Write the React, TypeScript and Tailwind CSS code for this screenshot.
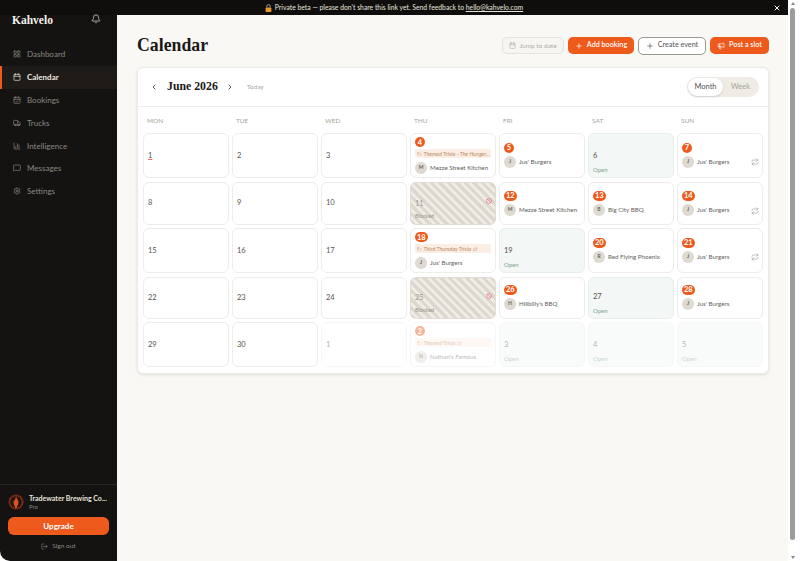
import type { ReactNode } from 'react';
import {
  Ban,
  Bell,
  Calendar,
  CalendarCheck,
  ChartColumn,
  ChevronLeft,
  ChevronRight,
  LayoutGrid,
  LogOut,
  Megaphone,
  MessageSquare,
  Plus,
  Repeat,
  Settings,
  Tag,
  Truck,
  X,
} from 'lucide-react';

interface Day {
  n: number;
  kind: 'empty' | 'open' | 'blocked' | 'booked';
  vendor?: string;
  event?: string;
  repeat?: boolean;
  muted?: boolean;
}

const nav = [
  { label: 'Dashboard', icon: LayoutGrid },
  { label: 'Calendar', icon: Calendar, active: true },
  { label: 'Bookings', icon: CalendarCheck },
  { label: 'Trucks', icon: Truck },
  { label: 'Intelligence', icon: ChartColumn },
  { label: 'Messages', icon: MessageSquare },
  { label: 'Settings', icon: Settings },
];

const weekdays = ['MON', 'TUE', 'WED', 'THU', 'FRI', 'SAT', 'SUN'];

const days: Day[] = [
  { n: 1, kind: 'empty' },
  { n: 2, kind: 'empty' },
  { n: 3, kind: 'empty' },
  { n: 4, kind: 'booked', vendor: 'Mezze Street Kitchen', event: 'Themed Trivia - The Hunger...' },
  { n: 5, kind: 'booked', vendor: "Jus' Burgers" },
  { n: 6, kind: 'open' },
  { n: 7, kind: 'booked', vendor: "Jus' Burgers", repeat: true },
  { n: 8, kind: 'empty' },
  { n: 9, kind: 'empty' },
  { n: 10, kind: 'empty' },
  { n: 11, kind: 'blocked' },
  { n: 12, kind: 'booked', vendor: 'Mezze Street Kitchen' },
  { n: 13, kind: 'booked', vendor: 'Big City BBQ' },
  { n: 14, kind: 'booked', vendor: "Jus' Burgers", repeat: true },
  { n: 15, kind: 'empty' },
  { n: 16, kind: 'empty' },
  { n: 17, kind: 'empty' },
  { n: 18, kind: 'booked', vendor: "Jus' Burgers", event: 'Third Thursday Trivia' },
  { n: 19, kind: 'open' },
  { n: 20, kind: 'booked', vendor: 'Red Flying Phoenix' },
  { n: 21, kind: 'booked', vendor: "Jus' Burgers", repeat: true },
  { n: 22, kind: 'empty' },
  { n: 23, kind: 'empty' },
  { n: 24, kind: 'empty' },
  { n: 25, kind: 'blocked' },
  { n: 26, kind: 'booked', vendor: "Hillbilly's BBQ" },
  { n: 27, kind: 'open' },
  { n: 28, kind: 'booked', vendor: "Jus' Burgers" },
  { n: 29, kind: 'empty' },
  { n: 30, kind: 'empty' },
  { n: 1, kind: 'empty', muted: true },
  { n: 2, kind: 'booked', vendor: "Nathan's Famous", event: 'Themed Trivia', muted: true },
  { n: 3, kind: 'open', muted: true },
  { n: 4, kind: 'open', muted: true },
  { n: 5, kind: 'open', muted: true },
];

function DayCell({ day, first }: { day: Day; first: boolean }) {
  const base = `h-full rounded-[6px] border pl-[4px] ${day.muted ? 'opacity-45' : ''}`;

  if (day.kind === 'open') {
    return (
      <div className={`${base} flex flex-col justify-end gap-[6px] border-[#e8eeeb] bg-[#f3f7f5] pb-[4px]`}>
        <span className="text-[7.5px] leading-[9px] text-[#55544f]">{day.n}</span>
        <span className="text-[6px] leading-[7px] text-[#7fa58f]">Open</span>
      </div>
    );
  }

  if (day.kind === 'blocked') {
    return (
      <div className={`${base} relative flex flex-col justify-end gap-[5px] border-[#e0dcd4] bg-[repeating-linear-gradient(45deg,#dcd8cf_0px,#dcd8cf_3px,#efece6_3px,#efece6_6px)] pb-[4px]`}>
        <span className="text-[7.5px] leading-[9px] text-[#a09c93]">{day.n}</span>
        <span className="text-[5.5px] leading-[7px] text-[#97938a]">Blocked</span>
        <Ban className="absolute right-[3px] top-[15px] size-[6px] text-[#e8668f]" strokeWidth={2.5} />
      </div>
    );
  }

  if (day.kind === 'empty') {
    return (
      <div className={`${base} flex items-center border-[#eeece8] bg-white`}>
        <span className={`text-[7.5px] text-[#55544f] ${first ? 'underline decoration-red-400' : ''}`}>{day.n}</span>
      </div>
    );
  }

  return (
    <div className={`${base} relative flex flex-col justify-center border-[#eeece8] bg-white pr-[4px]`}>
      <span className="flex h-[10px] min-w-[10px] items-center justify-center self-start rounded-full bg-[#ee5a1c] px-[2px] text-[7.5px] font-bold text-white">
        {day.n}
      </span>
      {day.event && (
        <div className="mt-[2px] flex h-[9px] items-center gap-[2px] rounded-[2px] bg-[#fdeee5] px-[2px] text-[5.5px] italic text-[#b98a63]">
          <Tag className="size-[4.5px] shrink-0" />
          <span className="whitespace-nowrap">{day.event}</span>
          {day.n !== 4 && <Repeat className="size-[4.5px] shrink-0" />}
        </div>
      )}
      <div className={`${day.event ? 'mt-[3.5px]' : 'mt-[3px]'} flex items-center gap-[3px]`}>
        <span className="flex size-[12px] shrink-0 items-center justify-center rounded-full bg-[#dedad2] text-[5px] font-bold text-[#66625b]">
          {day.vendor?.charAt(0)}
        </span>
        <span className="whitespace-nowrap text-[6.2px] text-[#62615c]">{day.vendor}</span>
      </div>
      {day.repeat && <Repeat className="absolute right-[3px] top-[24px] size-[8px] text-[#a8a49d]" />}
    </div>
  );
}

function ActionButton({ children, outline, width }: { children: ReactNode; outline?: boolean; width: string }) {
  return (
    <button
      className={`${width} ${
        outline
          ? 'flex h-[18px] items-center justify-center gap-[4px] rounded-[5px] border border-[#9a9892] bg-white text-[7.2px] text-[#55544f]'
          : 'flex h-[17px] items-center justify-center gap-[4px] rounded-[5px] bg-[#ee5a1c] text-[7.2px] font-semibold text-white'
      }`}
    >
      {children}
    </button>
  );
}

function BrewLogo() {
  return (
    <svg viewBox="0 0 32 32" className="size-[16px] shrink-0">
      <circle cx="16" cy="16" r="15.5" fill="#1c1210" />
      <circle cx="16" cy="16" r="13" fill="none" stroke="#8a3217" strokeWidth="4" strokeDasharray="3 1" />
      <path d="M16 5c1 4 5 6 5 12 0 3-1 6-3 8v3h-4v-3c-2-2-3-5-3-8 0-3 1-5 2-6 0 2 1 3 1 3 0-4 1-6 2-9z" fill="#d9531f" />
    </svg>
  );
}

function Sidebar() {
  return (
    <aside className="relative flex w-[117px] shrink-0 flex-col rounded-bl-[10px] bg-[#141312]">
      <div className="-mt-[4px] flex h-[16px] items-center justify-between pl-[12px] pr-[16px]">
        <span className="translate-y-[2px] font-['Liberation_Serif',serif] text-[11.5px] font-bold text-[#f5f2ec]">Kahvelo</span>
        <Bell className="size-[10px] text-[#c9c5be]" />
      </div>
      <nav className="mt-[16px] flex flex-col">
        {nav.map((item) => (
          <div
            key={item.label}
            className={`flex h-[22.8px] items-center gap-[6px] border-l-2 pl-[11px] text-[8px] ${
              item.active
                ? 'border-[#ee5a1c] bg-[#1f1b18] font-bold text-[#ece8e0]'
                : 'border-transparent text-[#8b8780]'
            }`}
          >
            <item.icon className="size-[8px]" />
            {item.label}
          </div>
        ))}
      </nav>
      <div className="mt-auto border-t border-[#2a2825] px-[8px] pb-[10px] pt-[8px]">
        <div className="flex items-center gap-[5px]">
          <BrewLogo />
          <div className="min-w-0 leading-none">
            <div className="whitespace-nowrap text-[7px] font-bold leading-[10px] text-[#e8e4dc]">Tradewater Brewing Co...</div>
            <div className="text-[6px] leading-[8px] text-[#8b8780]">Pro</div>
          </div>
        </div>
        <button className="mt-[6px] flex h-[18px] w-full items-center justify-center rounded-[6px] bg-[#ee5a1c] text-[8px] font-bold text-white">
          Upgrade
        </button>
        <div className="mt-[6px] flex h-[10px] items-center justify-center gap-[4px] text-[6.5px] text-[#8b8780]">
          <LogOut className="size-[7px]" />
          Sign out
        </div>
      </div>
    </aside>
  );
}

function CalendarCard() {
  return (
    <section className="mt-[12px] rounded-[6px] border border-[#eeece8] bg-white pb-[6px] shadow-[0_1px_3px_rgba(0,0,0,0.12)]">
      <div className="flex h-[39px] items-center border-b border-[#efedea] pl-[12px] pr-[9px]">
        <ChevronLeft className="size-[8px] text-[#3a3936]" strokeWidth={2.5} />
        <span className="ml-[9px] font-['Liberation_Serif',serif] text-[11.8px] font-bold text-[#1a1917]">June 2026</span>
        <ChevronRight className="ml-[8px] size-[8px] text-[#3a3936]" strokeWidth={2.5} />
        <span className="ml-[13px] text-[6.5px] text-[#a8a49d]">Today</span>
        <div className="ml-auto flex h-[20px] w-[72px] items-center rounded-full bg-[#efebe5] p-[1px] text-[7.5px]">
          <span className="flex h-[18px] w-[35px] items-center justify-center rounded-full bg-white text-[#55544f] shadow-sm">Month</span>
          <span className="flex-1 text-center text-[#a8a49d]">Week</span>
        </div>
      </div>
      <div className="px-[5px]">
        <div className="grid h-[26px] grid-cols-7 items-center gap-x-[3px] pt-[2px]">
          {weekdays.map((w) => (
            <span key={w} className="pl-[4px] text-[6.5px] text-[#a8a49d]">{w}</span>
          ))}
        </div>
        <div className="grid grid-cols-7 grid-rows-[45px_43px_45px_42px_45px] gap-x-[3px] gap-y-[3.5px]">
          {days.map((day, i) => (
            <DayCell key={i} day={day} first={i === 0} />
          ))}
        </div>
      </div>
    </section>
  );
}

export default function App() {
  return (
    <div className="flex h-[561px] overflow-hidden bg-white font-['Lato',sans-serif]">
      <div className="flex min-w-0 flex-1 flex-col">
        <div className="relative flex h-[15px] shrink-0 items-center justify-center bg-[#0f0e0d] text-[6.8px] text-[#e8e4dc]">
          <svg viewBox="0 0 12 14" className="mr-[3px] h-[8px] w-[7px]">
            <path d="M3 6V4a3 3 0 0 1 6 0v2" fill="none" stroke="#b9b4aa" strokeWidth="1.5" />
            <rect x="1" y="6" width="10" height="8" rx="1.5" fill="#e8962e" />
          </svg>
          <span>
            Private beta — please don't share this link yet. Send feedback to{' '}
            <span className="underline">hello@kahvelo.com</span>
          </span>
          <X className="absolute right-[7px] size-[8px] text-white" strokeWidth={3} />
        </div>
        <div className="flex min-h-0 flex-1">
          <Sidebar />
          <main className="min-w-0 flex-1 bg-[#faf8f5] pl-[20px] pr-[19px] pt-[21px]">
            <div className="flex h-[19px] items-center justify-between">
              <h1 className="font-['Liberation_Serif',serif] text-[17.8px] font-bold text-[#1a1917]">Calendar</h1>
              <div className="flex items-center gap-[4px]">
                <button className="flex h-[17px] w-[62px] items-center justify-center gap-[3px] rounded-[5px] border border-[#e6e3de] bg-[#f7f5f1] text-[6.5px] text-[#b0aca6]">
                  <Calendar className="size-[7px]" />
                  Jump to date
                </button>
                <ActionButton width="w-[66px]">
                  <Plus className="size-[8px]" />
                  Add booking
                </ActionButton>
                <ActionButton outline width="w-[68px]">
                  <Plus className="size-[8px]" />
                  Create event
                </ActionButton>
                <ActionButton width="w-[59px]">
                  <Megaphone className="size-[8px]" />
                  Post a slot
                </ActionButton>
              </div>
            </div>
            <CalendarCard />
          </main>
        </div>
      </div>
      {/* the browser's scrollbar is part of the picture */}
      <div className="flex w-[12px] shrink-0 flex-col items-start pl-[2px]">
        <div className="flex h-full w-[5px] flex-col items-center">
          <span className="mt-[2px] h-0 w-0 border-x-[2.5px] border-b-[3px] border-x-transparent border-b-[#8a8a8a]" />
          <span className="mt-[3px] w-[5px] flex-1 rounded-full bg-[#9c9c9c]" />
          <span className="mb-[2px] mt-[16px] h-0 w-0 border-x-[2.5px] border-t-[3px] border-x-transparent border-t-[#8a8a8a]" />
        </div>
      </div>
    </div>
  );
}
